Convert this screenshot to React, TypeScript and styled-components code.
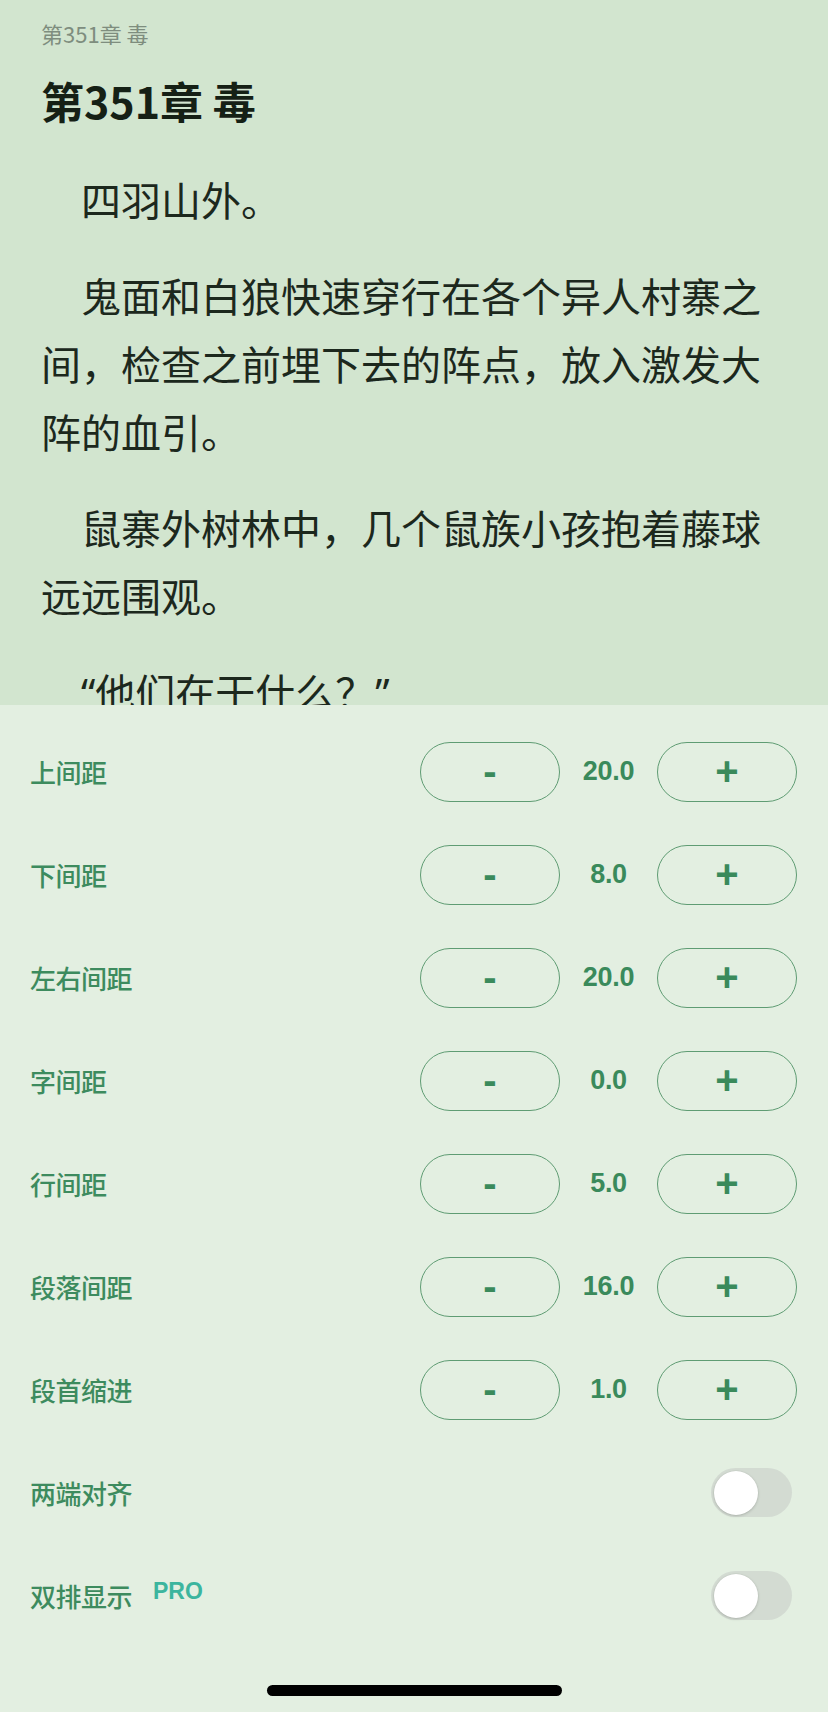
import React from "react";
import styled, { createGlobalStyle } from "styled-components";

const Global = createGlobalStyle`
  html, body { margin: 0; padding: 0; }
  body {
    width: 828px;
    background: #e3efe1;
    font-family: "Noto Sans CJK SC", "Noto Sans", sans-serif;
  }
  * { box-sizing: border-box; }
`;

const Screen = styled.div`
  width: 828px;
  height: 1712px;
  display: flex;
  flex-direction: column;
  overflow: hidden;
`;

const Reader = styled.div`
  height: 705px;
  flex: none;
  overflow: hidden;
  background: #d2e5cf;
  padding: 18px 41px 0 41px;
  color: #1c281d;
`;

const RunningHead = styled.div`
  font-size: 22px;
  line-height: 30px;
  color: #7e8d7e;
`;

const ChapterTitle = styled.h1`
  margin: 22px 0 37px 0;
  font-size: 43px;
  line-height: 60px;
  font-weight: 700;
  color: #152015;
`;

const Paragraph = styled.p`
  margin: 0 0 28px 0;
  font-family: "Noto Sans", "Noto Sans CJK SC", sans-serif;
  font-size: 40px;
  line-height: 68px;
  text-indent: 40px;
  color: #1c281d;
`;

const Panel = styled.div`
  flex: 1;
  background: #e3efe1;
  padding-top: 15px;
  display: flex;
  flex-direction: column;
`;

const Row = styled.div`
  height: 103px;
  display: flex;
  align-items: center;
  justify-content: space-between;
  padding: 0 31px 0 30px;
`;

const LabelWrap = styled.div`
  display: flex;
  align-items: center;
  gap: 21px;
`;

const Label = styled.span`
  font-size: 26px;
  font-weight: 500;
  color: #3d8b5e;
  letter-spacing: -0.5px;
`;

const ProTag = styled.span`
  font-family: "Liberation Sans", "Noto Sans", sans-serif;
  font-size: 23px;
  font-weight: 700;
  color: #3cb59e;
  margin-bottom: 8px;
`;

const Stepper = styled.div`
  display: flex;
  align-items: center;
`;

const StepButton = styled.div`
  width: 140px;
  height: 60px;
  border: 1.5px solid #5f9c73;
  border-radius: 30px;
  display: flex;
  align-items: center;
  justify-content: center;
  font-family: "Liberation Sans", sans-serif;
  font-weight: 700;
  font-size: 40px;
  color: #3a8a5b;
  line-height: 1;
  padding-bottom: 2px;
`;

const Value = styled.span`
  width: 97px;
  text-align: center;
  font-family: "Liberation Sans", sans-serif;
  font-weight: 700;
  font-size: 27px;
  color: #3a8a5b;
  letter-spacing: -0.3px;
`;

const Track = styled.div`
  width: 81px;
  height: 49px;
  border-radius: 25px;
  background: #d3dbd2;
  margin-right: 5px;
  padding: 2px 3px;
  display: flex;
  align-items: center;
`;

const Thumb = styled.div`
  width: 44px;
  height: 44px;
  border-radius: 50%;
  background: #ffffff;
  box-shadow: 0 1px 3px rgba(0, 0, 0, 0.18), 0 0 0 0.5px rgba(0, 0, 0, 0.04);
`;

const HomeBar = styled.div`
  width: 295px;
  height: 11px;
  border-radius: 6px;
  background: #000;
  margin: 38px auto 0 auto;
`;

const steppers = [
  { label: "上间距", value: "20.0" },
  { label: "下间距", value: "8.0" },
  { label: "左右间距", value: "20.0" },
  { label: "字间距", value: "0.0" },
  { label: "行间距", value: "5.0" },
  { label: "段落间距", value: "16.0" },
  { label: "段首缩进", value: "1.0" },
];

const paragraphs = [
  "四羽山外。",
  "鬼面和白狼快速穿行在各个异人村寨之间，检查之前埋下去的阵点，放入激发大阵的血引。",
  "鼠寨外树林中，几个鼠族小孩抱着藤球远远围观。",
  "“他们在干什么？”",
];

export default function App() {
  return (
    <>
      <Global />
      <Screen>
        <Reader>
          <RunningHead>第351章 毒</RunningHead>
          <ChapterTitle>第351章 毒</ChapterTitle>
          {paragraphs.map((p, i) => (
            <Paragraph key={i}>{p}</Paragraph>
          ))}
        </Reader>
        <Panel>
          {steppers.map((s) => (
            <Row key={s.label}>
              <Label>{s.label}</Label>
              <Stepper>
                <StepButton>-</StepButton>
                <Value>{s.value}</Value>
                <StepButton>+</StepButton>
              </Stepper>
            </Row>
          ))}
          <Row>
            <Label>两端对齐</Label>
            <Track>
              <Thumb />
            </Track>
          </Row>
          <Row>
            <LabelWrap>
              <Label>双排显示</Label>
              <ProTag>PRO</ProTag>
            </LabelWrap>
            <Track>
              <Thumb />
            </Track>
          </Row>
          <HomeBar />
        </Panel>
      </Screen>
    </>
  );
}
